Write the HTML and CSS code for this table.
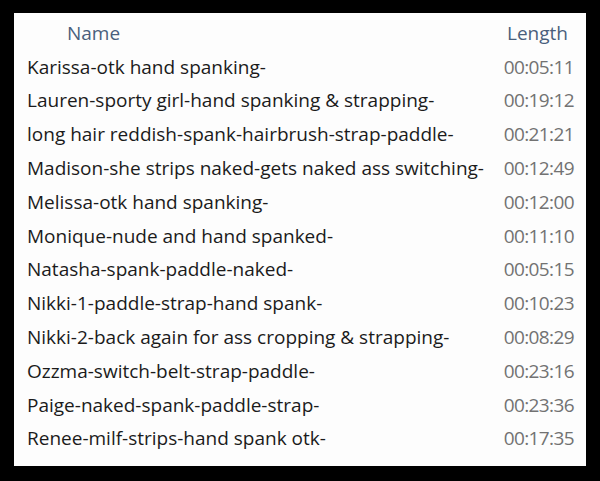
FILE: index.html
```html
<!DOCTYPE html>
<html lang="en">
<head>
  <meta charset="UTF-8">
  <title>Files</title>
  <link rel="stylesheet" href="styles.css">
</head>
<body>
  <div class="panel">
    <div class="row head">
      <span class="name">Name</span>
      <span class="len">Length</span>
    </div>
    <div class="row"><span class="name">Karissa-otk hand spanking-</span><span class="len">00:05:11</span></div>
    <div class="row"><span class="name">Lauren-sporty girl-hand spanking &amp; strapping-</span><span class="len">00:19:12</span></div>
    <div class="row"><span class="name">long hair reddish-spank-hairbrush-strap-paddle-</span><span class="len">00:21:21</span></div>
    <div class="row"><span class="name">Madison-she strips naked-gets naked ass switching-</span><span class="len">00:12:49</span></div>
    <div class="row"><span class="name">Melissa-otk hand spanking-</span><span class="len">00:12:00</span></div>
    <div class="row"><span class="name">Monique-nude and hand spanked-</span><span class="len">00:11:10</span></div>
    <div class="row"><span class="name">Natasha-spank-paddle-naked-</span><span class="len">00:05:15</span></div>
    <div class="row"><span class="name">Nikki-1-paddle-strap-hand spank-</span><span class="len">00:10:23</span></div>
    <div class="row"><span class="name">Nikki-2-back again for ass cropping &amp; strapping-</span><span class="len">00:08:29</span></div>
    <div class="row"><span class="name">Ozzma-switch-belt-strap-paddle-</span><span class="len">00:23:16</span></div>
    <div class="row"><span class="name">Paige-naked-spank-paddle-strap-</span><span class="len">00:23:36</span></div>
    <div class="row"><span class="name">Renee-milf-strips-hand spank otk-</span><span class="len">00:17:35</span></div>
  </div>
</body>
</html>
```

FILE: styles.css
```css
html, body {
  margin: 0;
  background: #000;
  height: 100%;
}
body {
  padding: 13px 14px 15px 14px;
  box-sizing: border-box;
  font-family: "Open Sans", "Noto Sans", sans-serif;
  font-size: 19px;
}
.panel {
  background: #fdfdfd;
  height: 100%;
  padding: 3px 12px 0 13px;
  box-sizing: border-box;
}
.row {
  display: flex;
  justify-content: space-between;
  align-items: center;
  height: 33.8px;
}
.name {
  color: #1b1b1b;
}
.len {
  color: #727272;
  letter-spacing: -0.6px;
}
.head .name {
  color: #4a5f7c;
  padding-left: 40px;
}
.head .len {
  color: #4a5f7c;
  letter-spacing: 0;
  padding-right: 6px;
}
```
